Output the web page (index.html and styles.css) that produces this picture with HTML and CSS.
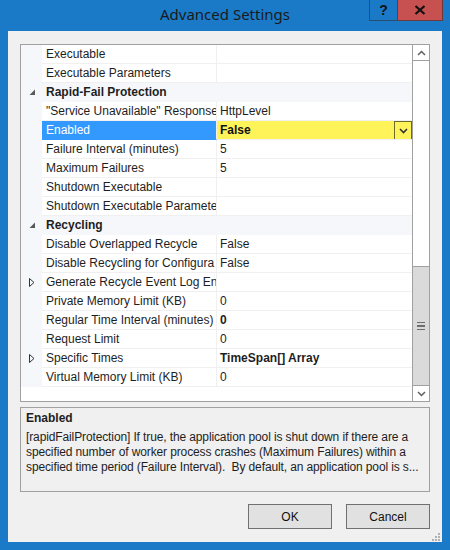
FILE: index.html
```html
<!DOCTYPE html>
<html>
<head>
<meta charset="utf-8">
<link rel="stylesheet" href="styles.css">
</head>
<body>
<div class="window">
  <div class="titlebar">
    <div class="title">Advanced Settings</div>
    <div class="caption-btns">
      <div class="cbtn help">?</div>
      <div class="cbtn close"><svg width="12" height="10" viewBox="0 0 12 10"><path d="M1.5 1 L10.5 9 M10.5 1 L1.5 9" stroke="#111" stroke-width="2.2" fill="none"/></svg></div>
    </div>
  </div>
  <div class="client">
    <div class="grid">
      <div class="rows">
        <div class="row"><div class="margin"></div><div class="name">Executable</div><div class="value"></div></div>
        <div class="row"><div class="margin"></div><div class="name">Executable Parameters</div><div class="value"></div></div>
        <div class="row cat"><div class="margin"><svg class="exp" width="7" height="7" viewBox="0 0 7 7"><path d="M6 0.5 L6 6 L0.5 6 Z" fill="#595959"/></svg></div><div class="name">Rapid-Fail Protection</div></div>
        <div class="row"><div class="margin"></div><div class="name">"Service Unavailable" Response</div><div class="value">HttpLevel</div></div>
        <div class="row sel"><div class="margin"></div><div class="name">Enabled</div><div class="value b">False<div class="dd"><svg width="9" height="6" viewBox="0 0 9 6"><path d="M1 1 L4.5 4.5 L8 1" stroke="#333" stroke-width="1.6" fill="none"/></svg></div></div></div>
        <div class="row"><div class="margin"></div><div class="name">Failure Interval (minutes)</div><div class="value">5</div></div>
        <div class="row"><div class="margin"></div><div class="name">Maximum Failures</div><div class="value">5</div></div>
        <div class="row"><div class="margin"></div><div class="name">Shutdown Executable</div><div class="value"></div></div>
        <div class="row"><div class="margin"></div><div class="name">Shutdown Executable Paramete</div><div class="value"></div></div>
        <div class="row cat"><div class="margin"><svg class="exp" width="7" height="7" viewBox="0 0 7 7"><path d="M6 0.5 L6 6 L0.5 6 Z" fill="#595959"/></svg></div><div class="name">Recycling</div></div>
        <div class="row"><div class="margin"></div><div class="name">Disable Overlapped Recycle</div><div class="value">False</div></div>
        <div class="row"><div class="margin"></div><div class="name">Disable Recycling for Configura</div><div class="value">False</div></div>
        <div class="row"><div class="margin"><svg class="col" width="6" height="9" viewBox="0 0 6 9"><path d="M0.5 0.5 L5 4.5 L0.5 8.5 Z" fill="none" stroke="#333" stroke-width="1"/></svg></div><div class="name">Generate Recycle Event Log En</div><div class="value"></div></div>
        <div class="row"><div class="margin"></div><div class="name">Private Memory Limit (KB)</div><div class="value">0</div></div>
        <div class="row"><div class="margin"></div><div class="name">Regular Time Interval (minutes)</div><div class="value b">0</div></div>
        <div class="row"><div class="margin"></div><div class="name">Request Limit</div><div class="value">0</div></div>
        <div class="row"><div class="margin"><svg class="col" width="6" height="9" viewBox="0 0 6 9"><path d="M0.5 0.5 L5 4.5 L0.5 8.5 Z" fill="none" stroke="#333" stroke-width="1"/></svg></div><div class="name">Specific Times</div><div class="value b">TimeSpan[] Array</div></div>
        <div class="row"><div class="margin"></div><div class="name">Virtual Memory Limit (KB)</div><div class="value">0</div></div>
      </div>
      <div class="scrollbar">
        <div class="sbtn"><svg width="9" height="6" viewBox="0 0 9 6"><path d="M1 5 L4.5 1.5 L8 5" stroke="#606060" stroke-width="1.5" fill="none"/></svg></div>
        <div class="track"></div>
        <div class="thumb"><div class="grip"></div><div class="grip"></div><div class="grip"></div></div>
        <div class="sbtn down"><svg width="9" height="6" viewBox="0 0 9 6"><path d="M1 1 L4.5 4.5 L8 1" stroke="#606060" stroke-width="1.5" fill="none"/></svg></div>
      </div>
    </div>
    <div class="desc">
      <div class="desc-title">Enabled</div>
      <div class="desc-text">[rapidFailProtection] If true, the application pool is shut down if there are a<br>specified number of worker process crashes (Maximum Failures) within a<br>specified time period (Failure Interval).&nbsp; By default, an application pool is s...</div>
    </div>
    <div class="buttons">
      <div class="btn">OK</div>
      <div class="btn">Cancel</div>
    </div>
    <div class="grip-corner"><svg width="10" height="10" viewBox="0 0 10 10"><g fill="#b0b0b0"><rect x="7" y="1" width="2" height="2"/><rect x="4" y="4" width="2" height="2"/><rect x="7" y="4" width="2" height="2"/><rect x="1" y="7" width="2" height="2"/><rect x="4" y="7" width="2" height="2"/><rect x="7" y="7" width="2" height="2"/></g></svg></div>
  </div>
</div>
</body>
</html>
```
FILE: styles.css
```css
* { box-sizing: border-box; }
html, body { margin: 0; padding: 0; }
body {
  font-family: "Liberation Sans", Arial, sans-serif;
  font-size: 12px;
  color: #1e1e1e;
}
.window {
  width: 450px;
  height: 550px;
  background: #1a7ac8;
  display: flex;
  flex-direction: column;
}
.titlebar {
  height: 31px;
  position: relative;
  display: flex;
  justify-content: center;
}
.title {
  font-family: "Noto Sans", "Liberation Sans", sans-serif;
  font-size: 15px;
  color: #1a1a1a;
  padding-top: 4px;
}
.caption-btns {
  position: absolute;
  top: 0;
  right: 7px;
  display: flex;
}
.cbtn {
  height: 21px;
  display: flex;
  align-items: center;
  justify-content: center;
  border: 1px solid #2a4f6e;
  border-top: none;
}
.help {
  width: 28px;
  font-weight: bold;
  font-size: 14px;
  color: #111;
  border-right: none;
}
.close {
  width: 46px;
  background: #c75050;
  border-color: #6b3a3a;
}
.client {
  flex: 1;
  margin: 0 8px 8px 8px;
  background: #f0f0f0;
  padding: 13px 12px 0 12px;
  display: flex;
  flex-direction: column;
  position: relative;
}
.grid {
  height: 358px;
  border: 1px solid #a0a0a0;
  background: #fff;
  display: flex;
}
.rows {
  flex: 1;
  display: flex;
  flex-direction: column;
  min-width: 0;
}
.row {
  height: 19px;
  display: flex;
  flex-shrink: 0;
}
.margin {
  width: 21px;
  background: #f5f7fb;
  display: flex;
  align-items: center;
  justify-content: center;
  flex-shrink: 0;
}
.exp { margin-left: 2px; }
.col { margin-left: 1px; }
.name {
  width: 175px;
  flex-shrink: 0;
  padding: 2px 0 0 4px;
  white-space: nowrap;
  overflow: hidden;
  border-right: 1px solid #f0f0f0;
  border-bottom: 1px solid #f0f0f0;
}
.value {
  flex: 1;
  padding: 2px 0 0 3px;
  white-space: nowrap;
  overflow: hidden;
  border-bottom: 1px solid #f0f0f0;
  position: relative;
  display: flex;
}
.b { font-weight: bold; }
.cat { background: #f5f7fb; }
.cat .name {
  font-weight: bold;
  border: none;
  width: auto;
  flex: 1;
}
.sel .name {
  background: #3399ff;
  color: #fff;
  border-bottom-color: #3399ff;
}
.sel .value {
  background: #fff35a;
  color: #111;
}
.dd {
  position: absolute;
  right: 0;
  top: 0;
  width: 18px;
  height: 19px;
  border: 1px solid #6e6a2a;
  display: flex;
  align-items: center;
  justify-content: center;
}
.scrollbar {
  width: 17px;
  border-left: 1px solid #a0a0a0;
  display: flex;
  flex-direction: column;
  background: #fff;
}
.sbtn {
  height: 16px;
  display: flex;
  align-items: center;
  justify-content: center;
  border-bottom: 1px solid #a0a0a0;
}
.sbtn.down {
  border-bottom: none;
  border-top: 1px solid #a0a0a0;
}
.track { height: 205px; }
.thumb {
  flex: 1;
  background: #dadada;
  border-top: 1px solid #a0a0a0;
  display: flex;
  flex-direction: column;
  align-items: center;
  justify-content: center;
  gap: 2px;
}
.grip {
  width: 8px;
  height: 1.5px;
  background: #6e6e6e;
}
.desc {
  margin-top: 5px;
  height: 85px;
  border: 1px solid #a0a0a0;
  background: #f0f0f0;
  padding: 3px 4px 0 5px;
}
.desc-title {
  font-weight: bold;
  height: 19px;
  line-height: 15px;
}
.desc-text {
  line-height: 15px;
  white-space: nowrap;
  letter-spacing: -0.12px;
}
.buttons {
  margin-top: 12px;
  display: flex;
  justify-content: flex-end;
  gap: 14px;
}
.btn {
  width: 84px;
  height: 25px;
  background: #e1e1e1;
  border: 1px solid #707070;
  display: flex;
  align-items: center;
  justify-content: center;
  color: #111;
}
.grip-corner {
  position: absolute;
  right: 1px;
  bottom: 1px;
  width: 10px;
  height: 10px;
}
```
